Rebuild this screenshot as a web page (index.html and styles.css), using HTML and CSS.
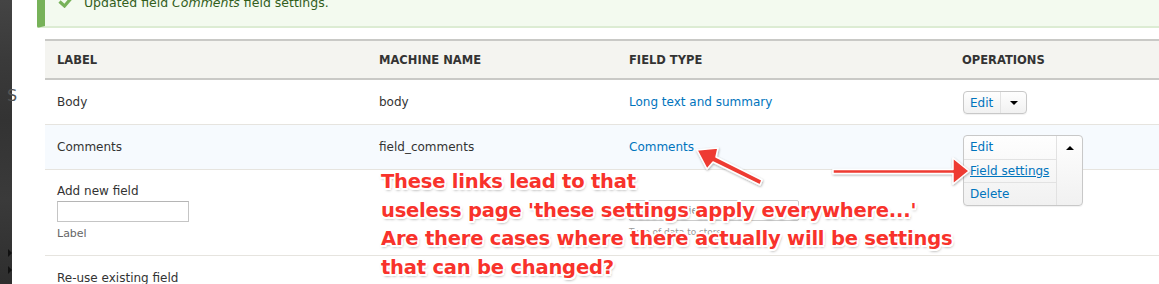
FILE: index.html
```html
<!DOCTYPE html>
<html lang="en">
<head>
    <meta charset="UTF-8">
    <title>Manage fields</title>
    <link rel="stylesheet" href="styles.css">
</head>
<body>
<div class="page">
    <div class="side">
        <span class="side-s">S</span>
        <span class="side-arrow a1"></span>
        <span class="side-arrow a2"></span>
    </div>

    <div class="main">
        <div class="messages">
            <svg class="check" width="17" height="14" viewBox="0 0 17 14"><path d="M1.5 7.5 L6.5 12 L15.5 1.5" fill="none" stroke="#77b259" stroke-width="3.2"/></svg>
            Updated field <em>Comments</em> field settings.
        </div>

        <table class="fields">
            <colgroup>
                <col class="c-label">
                <col class="c-machine">
                <col class="c-type">
                <col class="c-ops">
            </colgroup>
            <thead>
                <tr>
                    <th>Label</th>
                    <th>Machine name</th>
                    <th>Field type</th>
                    <th>Operations</th>
                </tr>
            </thead>
            <tbody>
                <tr>
                    <td>Body</td>
                    <td>body</td>
                    <td><a href="#">Long text and summary</a></td>
                    <td>
                        <div class="dropbutton">
                            <a href="#" class="db-main">Edit</a>
                            <span class="db-toggle"><span class="tri-down"></span></span>
                        </div>
                    </td>
                </tr>
                <tr class="selected">
                    <td>Comments</td>
                    <td>field_comments</td>
                    <td><a href="#">Comments</a></td>
                    <td class="ops-open">
                        <div class="dropbutton open">
                            <ul class="db-list">
                                <li><a href="#">Edit</a></li>
                                <li><a href="#" class="hover">Field settings</a></li>
                                <li><a href="#">Delete</a></li>
                            </ul>
                            <span class="db-toggle"><span class="tri-up"></span></span>
                        </div>
                    </td>
                </tr>
                <tr class="add-row">
                    <td>
                        <div class="form-label">Add new field</div>
                        <input type="text" class="form-text">
                        <div class="desc">Label</div>
                    </td>
                    <td></td>
                    <td>
                        <div class="form-select">- Select a field type -</div>
                        <div class="desc faint">Type of data to store.</div>
                    </td>
                    <td></td>
                </tr>
                <tr>
                    <td>Re-use existing field</td>
                    <td></td>
                    <td></td>
                    <td></td>
                </tr>
            </tbody>
        </table>
    </div>

    <svg class="arrows" width="1159" height="284" viewBox="0 0 1159 284">
        <defs>
            <filter id="sh" x="-20%" y="-20%" width="140%" height="140%">
                <feDropShadow dx="0.5" dy="1" stdDeviation="1" flood-color="#000" flood-opacity="0.35"/>
            </filter>
        </defs>
        <g filter="url(#sh)" stroke="#fff" stroke-width="1.5" stroke-linejoin="round">
            <path d="M762 180 L716 157 L718 148 L697 150 L707 169 L713 162 L760 185 Z" fill="#ee3a30"/>
            <path d="M833 169.5 L953 169.5 L953 158 L969 171 L953 184 L953 173.5 L833 173.5 Z" fill="#ee3a30"/>
        </g>
    </svg>

    <div class="note">
        These links lead to that<br>
        useless page 'these settings apply everywhere...'<br>
        Are there cases where there actually will be settings<br>
        that can be changed?
    </div>
</div>
</body>
</html>
```

FILE: styles.css
```css
html, body { margin: 0; padding: 0; }
body {
    background: #fff;
    font-family: "DejaVu Sans", "Lucida Grande", sans-serif;
    font-size: 12px;
    color: #333;
    overflow: hidden;
}
a { color: #0074bd; text-decoration: none; }

.page {
    position: relative;
    display: flex;
    width: 1159px;
    height: 284px;
    overflow: hidden;
}

/* dark strip at the left edge */
.side {
    position: relative;
    width: 12px;
    flex: none;
    background: linear-gradient(#444 0, #3a3a3a 60px, #333 120px, #3a3a3a 200px, #2e2e2e 284px);
}
.side-s {
    position: absolute;
    top: 86px;
    left: 7px;
    color: #555;
    font-size: 16px;
}
.side-arrow {
    position: absolute;
    left: 8px;
    border-left: 4px solid #111;
    border-top: 4px solid transparent;
    border-bottom: 4px solid transparent;
}
.side-arrow.a1 { top: 249px; }
.side-arrow.a2 { top: 266px; }

.main {
    flex: 1;
    padding-left: 25px;
}

.messages {
    margin-top: -20px;
    height: 48px;
    box-sizing: border-box;
    padding: 14px 0 0 13px;
    background: #f3faef;
    border-left: 8px solid #77b259;
    border-bottom: 2px solid #dcecd3;
    border-bottom-left-radius: 2px;
    color: #325e1c;
    font-size: 12.5px;
    line-height: 18px;
}
.messages .check {
    vertical-align: -1px;
    margin-right: 5px;
}

.fields {
    margin: 11px 0 0 8px;
    width: 1114px;
    table-layout: fixed;
    border-collapse: collapse;
}
.c-label { width: 322px; }
.c-machine { width: 250px; }
.c-type { width: 333px; }
.c-ops { width: 209px; }

.fields th {
    text-align: left;
    text-transform: uppercase;
    font-size: 11.5px;
    font-weight: bold;
    color: #333;
    background: #f4f4f0;
    border-top: 2px solid #c9c9c6;
    border-bottom: 2px solid #c9c9c6;
    height: 37px;
    padding: 0 12px;
}
.fields td {
    height: 44px;
    padding: 0 12px;
    border-bottom: 1px solid #e6e4df;
    vertical-align: middle;
}
.fields tr.selected td { background: #f6fafe; }

.add-row td {
    height: 86px;
    vertical-align: top;
    padding-top: 13px;
    box-sizing: border-box;
}
.form-label { line-height: 16px; }
.form-text {
    display: block;
    margin: 2px 0 0;
    width: 132px;
    height: 21px;
    box-sizing: border-box;
    border: 1px solid #c5c5c5;
    border-top-color: #b5b5b5;
    padding: 0;
}
.desc {
    margin-top: 5px;
    font-size: 11px;
    color: #666;
}
.desc.faint { color: #999; font-size: 9px; margin-top: 6px; }
.form-select {
    margin-top: 17px;
    width: 170px;
    height: 21px;
    box-sizing: border-box;
    border: 1px solid #ccc;
    border-radius: 2px;
    padding: 4px 5px;
    font-size: 10px;
    color: #888;
    white-space: nowrap;
    overflow: hidden;
}

/* operations dropbutton */
.dropbutton {
    display: inline-flex;
    border: 1px solid #c8c8c8;
    border-radius: 4px;
    background: linear-gradient(#fefefe, #f1f1f1);
    box-shadow: 0 1px 1px rgba(0,0,0,0.06);
    margin-left: 1px;
}
.db-main {
    display: block;
    padding: 3px 8px 0 6px;
    height: 21px;
    box-sizing: border-box;
    line-height: 16px;
    font-size: 12px;
    border-right: 1px solid #e2e2e2;
    width: 37px;
}
.db-toggle {
    display: block;
    width: 25px;
    position: relative;
}
.tri-down, .tri-up {
    position: absolute;
    left: 9px;
    border-left: 4px solid transparent;
    border-right: 4px solid transparent;
}
.tri-down { top: 9px; border-top: 4px solid #000; }
.tri-up { top: 10px; border-bottom: 4px solid #000; }
.dropbutton .db-main + .db-toggle { height: 21px; }

.ops-open { position: relative; }
.dropbutton.open {
    position: absolute;
    top: 10px;
    left: 12px;
    z-index: 1;
}
.db-list {
    list-style: none;
    margin: 0;
    padding: 0;
    width: 92px;
    border-right: 1px solid #e2e2e2;
}
.db-list li {
    height: 23px;
    box-sizing: border-box;
    padding: 3px 0 0 6px;
    line-height: 16px;
    border-top: 1px solid #e2e2e2;
}
.db-list li:first-child { border-top: 0; }
.db-list a.hover { text-decoration: underline; }
.dropbutton.open .db-toggle { height: 67px; }

/* annotation overlay */
.arrows {
    position: absolute;
    left: 0;
    top: 0;
    z-index: 2;
    pointer-events: none;
}
.note {
    position: absolute;
    left: 381px;
    top: 168px;
    z-index: 3;
    font-family: "DejaVu Sans", Arial, sans-serif;
    font-weight: bold;
    font-size: 19.5px;
    line-height: 28.6px;
    letter-spacing: -0.2px;
    color: #f8322b;
    white-space: nowrap;
    text-shadow:
        -2px 0 0 #fff, 2px 0 0 #fff, 0 -2px 0 #fff, 0 2px 0 #fff,
        -1.5px -1.5px 0 #fff, 1.5px -1.5px 0 #fff, -1.5px 1.5px 0 #fff, 1.5px 1.5px 0 #fff,
        1px 2px 3px rgba(0,0,0,0.5);
}
```
